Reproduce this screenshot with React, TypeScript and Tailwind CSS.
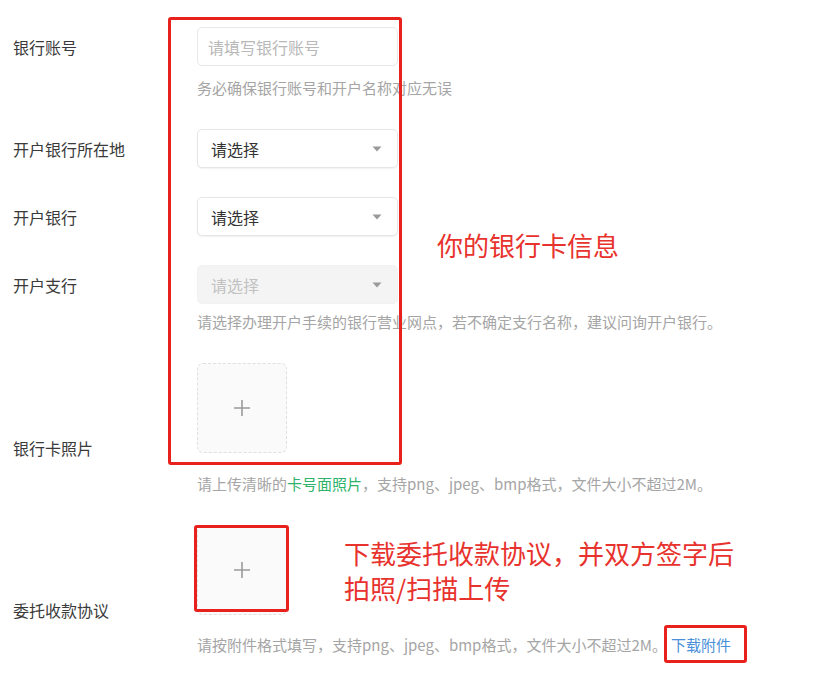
import React from "react"

const labelCls = "w-[184px] shrink-0 text-[16px] leading-[20px] text-[#3a3a3a]"
const hintCls = "whitespace-nowrap text-[15px] leading-[22px] text-[#a5a5a5]"

function Caret() {
  return (
    <svg width="10" height="6" viewBox="0 0 10 6" className="shrink-0">
      <path d="M0.5 0.5 H9.5 L5 5.5 Z" fill="#9a9a9a" />
    </svg>
  )
}

function SelectBox({ disabled }: { disabled?: boolean }) {
  return (
    <div
      className={
        "flex h-[39px] w-[201px] items-center justify-between rounded-[5px] border pl-[13px] pr-[15px] " +
        (disabled
          ? "border-[#f2f2f2] bg-[#f4f4f4] text-[#c2c2c2]"
          : "border-[#e6e6e6] bg-white text-[#333] shadow-[0_1px_2px_rgba(0,0,0,0.06)]")
      }>
      <span className="text-[16px]">请选择</span>
      <Caret />
    </div>
  )
}

function Upload() {
  return (
    <div className="flex h-[90px] w-[90px] items-center justify-center rounded-[6px] border border-dashed border-[#e0e0e0] bg-[#fafafa]">
      <svg width="18" height="18" viewBox="0 0 18 18">
        <path d="M9 1 V17 M1 9 H17" stroke="#9b9b9b" strokeWidth="1.6" />
      </svg>
    </div>
  )
}

export default function App() {
  return (
    <div className="relative h-[681px] w-[822px] overflow-hidden bg-white font-['Noto_Sans_CJK_SC','Noto_Sans',sans-serif]">
      {/* <--- form ---> */}
      <div className="flex flex-col pl-[13px] pt-[27px]">
        <section className="flex items-center">
          <div className={labelCls}>银行账号</div>
          <div className="flex h-[39px] w-[201px] items-center rounded-[5px] border border-[#e8e8e8] bg-white pl-[10px] text-[16px] text-[#b8b8b8]">
            请填写银行账号
          </div>
        </section>
        <div className={"ml-[184px] mt-[11px] " + hintCls}>务必确保银行账号和开户名称对应无误</div>

        <section className="mt-[30px] flex items-center">
          <div className={labelCls}>开户银行所在地</div>
          <SelectBox />
        </section>

        <section className="mt-[29px] flex items-center">
          <div className={labelCls}>开户银行</div>
          <SelectBox />
        </section>

        <section className="mt-[29px] flex items-center">
          <div className={labelCls}>开户支行</div>
          <SelectBox disabled />
        </section>
        <div className={"ml-[184px] mt-[7px] " + hintCls}>
          请选择办理开户手续的银行营业网点，若不确定支行名称，建议问询开户银行。
        </div>

        <section className="mt-[30px] flex items-end">
          <div className={labelCls + " -mb-[5px]"}>银行卡照片</div>
          <Upload />
        </section>
        <div className={"ml-[184px] mt-[20px] " + hintCls}>
          请上传清晰的<span className="text-[#2fb36b]">卡号面照片</span>，支持png、jpeg、bmp格式，文件大小不超过2M。
        </div>

        <section className="mt-[30px] flex items-end">
          <div className={labelCls + " -mb-[5px]"}>委托收款协议</div>
          <Upload />
        </section>
        <div className={"ml-[184px] mt-[19px] " + hintCls}>
          请按附件格式填写，支持png、jpeg、bmp格式，文件大小不超过2M。
          <span className="ml-[4px] text-[#4a90d9]">下载附件</span>
        </div>
      </div>

      {/* <--- annotations ---> */}
      <div className="absolute left-[168px] top-[17px] h-[448px] w-[234px] rounded-[3px] border-[3px] border-[#e8211c]" />
      <div className="absolute left-[194px] top-[525px] h-[87px] w-[95px] rounded-[3px] border-[3px] border-[#e8211c]" />
      <div className="absolute left-[664px] top-[625px] h-[38px] w-[83px] rounded-[3px] border-[3px] border-[#e8211c]" />

      <div className="absolute left-[437px] top-[228px] text-[26px] leading-[34px] text-[#e8322d]">你的银行卡信息</div>
      <div className="absolute left-[344px] top-[535px] text-[26px] leading-[35px] text-[#e8322d]">
        <div>下载委托收款协议，并双方签字后</div>
        <div>拍照/扫描上传</div>
      </div>
    </div>
  )
}
